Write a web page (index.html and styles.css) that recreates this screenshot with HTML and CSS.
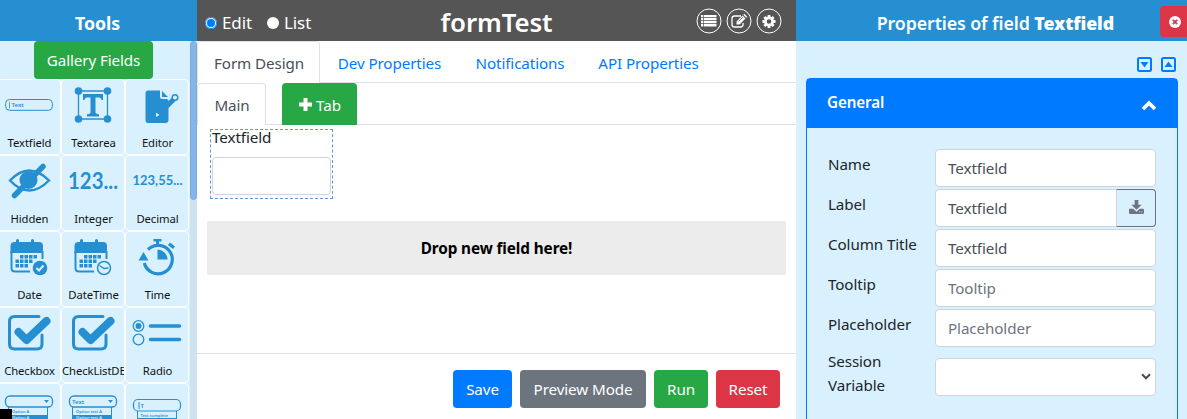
FILE: index.html
```html
<!DOCTYPE html>
<html lang="en">
<head>
<meta charset="utf-8">
<title>formTest</title>
<link rel="stylesheet" href="styles.css">
</head>
<body>
<div class="app">
  <aside class="tools">
    <header class="panel-head tools-head"><span>Tools</span></header>
    <div class="tools-body">
      <div class="tools-list">
        <div class="gallery"><button class="btn green gallery-btn"><span>Gallery Fields</span></button></div>
        <div class="grid">
          <div class="tool"><svg viewBox="0 0 64 52"><rect x="8.6" y="20.5" width="46.800" height="10.800" rx="4" class="ln" stroke-width="1"/><path class="ln" stroke-width=".8" d="M12.500 22.500v7"/><text x="14.500" y="28.400" class="tiny6">Text</text></svg><span>Textfield</span></div>
          <div class="tool"><svg viewBox="0 0 64 52"><path class="ln" stroke-width="1.300" d="M17.500 12h29v28h-29z"/><g class="fl"><circle cx="17.500" cy="12" r="3.800"/><circle cx="46.500" cy="12" r="3.800"/><circle cx="17.500" cy="40" r="3.800"/><circle cx="46.500" cy="40" r="3.800"/><path d="M22 15h20v6h-1.500c-.4-2-1.500-2.500-3-2.500h-3V33c0 1.500.5 2 3.500 2.300V37.500H26v-2.200c3-.3 3.500-.8 3.500-2.300V18.500h-3c-1.500 0-2.600.5-3 2.500H22z"/></g></svg><span>Textarea</span></div>
          <div class="tool"><svg viewBox="0 0 64 52"><path class="fl" d="M23 11.500h12v6q0 2.500 2.500 2.500h4.500l1.500 1.500V41q0 3-3 3H23q-2.500 0-2.500-3V14q0-2.500 2.500-2.500zM37 12l6 6h-6z"/><path class="ln" stroke-width="5" d="M42 27l7-7"/><path class="fl" d="M39 25l4.500 4-5.500 2z"/><circle cx="50" cy="18.500" r="2.800" fill="#d9f1ff" stroke="#268fd1" stroke-width="1.500"/><path fill="#d9f1ff" d="M31 33.500l3.500 2.500-3.500 2z"/></svg><span>Editor</span></div>

          <div class="tool"><svg viewBox="0 0 64 52"><path class="ln" stroke-width="2.400" d="M13 25.500Q32 5.500 52 25.500Q32 45.500 13 25.500z"/><circle class="fl" cx="31.500" cy="25" r="9"/><path class="ln" stroke-width="5.500" stroke-linecap="round" d="M17.500 40.500L46 11.500"/></svg><span>Hidden</span></div>
          <div class="tool"><svg viewBox="0 0 64 52"><text x="7" y="33.500" class="num" font-size="22" textLength="50" lengthAdjust="spacingAndGlyphs">123...</text></svg><span>Integer</span></div>
          <div class="tool"><svg viewBox="0 0 64 52"><text x="7.500" y="30" class="num" font-size="13.500" textLength="50" lengthAdjust="spacingAndGlyphs">123,55...</text></svg><span>Decimal</span></div>

          <div class="tool"><svg viewBox="0 0 64 52"><use href="#calendar"/><circle class="fl" cx="43" cy="37" r="7.300"/><path d="M39.500 37l2.500 2.500 4.500-5" fill="none" stroke="#d9f1ff" stroke-width="2"/></svg><span>Date</span></div>
          <div class="tool"><svg viewBox="0 0 64 52"><use href="#calendar"/><circle cx="43" cy="37" r="6.500" fill="#d9f1ff" stroke="#268fd1" stroke-width="1.500"/><path class="ln" stroke-width="1.500" d="M38.500 34.500l4.500 3 4.500-.5"/></svg><span>DateTime</span></div>
          <div class="tool"><svg viewBox="0 0 64 52"><path class="ln" stroke-width="3.200" d="M23 18.500A14.200 14.200 0 1 1 19.300 32"/><path class="fl" d="M28.500 8h8v2.500H34v4h-3v-4h-2.500zM32.500 18.500A10 10 0 0 1 42.500 28.500h-10zM13.500 29.500L18.500 21l5 8.500zM43 14l2-2.500 5 4-2 2.500z"/></svg><span>Time</span></div>

          <div class="tool"><svg viewBox="0 0 64 52"><use href="#check"/></svg><span>Checkbox</span></div>
          <div class="tool long"><svg viewBox="0 0 64 52"><use href="#check"/></svg><span>CheckListDB</span></div>
          <div class="tool"><svg viewBox="0 0 64 52"><g class="ln" stroke-width="1.300"><circle cx="13.500" cy="19" r="5.300"/><circle cx="13.500" cy="32.500" r="5.300"/></g><circle class="fl" cx="13.500" cy="19" r="3"/><path class="ln" stroke-width="3.600" stroke-linecap="round" d="M25.500 19h29M25.500 32.500h29"/></svg><span>Radio</span></div>

          <div class="tool"><svg viewBox="0 0 64 52"><use href="#drop"/><text x="15" y="30.300" class="tiny4">Option A</text><path class="fl" d="M11 32h40v14H11z"/><text x="15" y="36" class="tiny4 light">Option A</text></svg></div>
          <div class="tool"><svg viewBox="0 0 64 52"><use href="#drop"/><text x="11" y="21" class="tiny6">Text</text><text x="15" y="30.300" class="tiny4">Option text A</text><path class="fl" d="M11 32h40v14H11z"/><text x="15" y="36" class="tiny4 light">Option text A</text></svg></div>
          <div class="tool"><svg viewBox="0 0 64 52"><rect class="ln" x="8.500" y="16.500" width="47" height="11.500" rx="4.500" stroke-width="1.200"/><path class="ln" d="M14 19v7M12.500 28v15M51.500 28v15"/><text x="15.500" y="25" class="tiny6">T</text><text x="15.500" y="33.500" class="tiny4">Text complete</text><path class="fl" d="M12 35h39v9H12z"/></svg></div>
        </div>
      </div>
      <div class="scroll"><i></i></div>
    </div>
    <div class="status-corner"></div>
  </aside>

  <main class="main">
    <header class="main-head">
      <div class="modes"><i class="radio on"></i><span class="edit">Edit</span><i class="radio"></i><span>List</span></div>
      <h1><span>formTest</span></h1>
      <div class="round-icons">
        <svg viewBox="0 0 26 26"><circle cx="13" cy="13" r="12"/><path stroke="none" fill="#fff" d="M5 7h2.300v2.300H5zM8 7h12.500v2.300H8zM5 10h2.300v2.300H5zM8 10h12.500v2.300H8zM5 13h2.300v2.300H5zM8 13h12.500v2.300H8zM5 16h2.300v2.500H5zM8 16h12.500v2.500H8z"/></svg>
        <svg viewBox="0 0 26 26"><circle cx="13" cy="13" r="12"/><path stroke-width="1.300" d="M15 8H8.500Q6 8 6 10.500V16.500Q6 19 8.500 19H14.500Q17 19 17 16.500V15"/><path stroke="none" fill="#fff" d="M10.500 13.500l6-6 3 3-6 6h-3zM17.300 6.700l1-1 3 3-1 1z"/><path stroke="#555" stroke-width=".8" d="M12.500 13.500l4.500-4.500"/></svg>
        <svg viewBox="0 0 26 26"><circle cx="13" cy="13" r="12"/><circle cx="13" cy="13.500" r="3.600" stroke-width="2.600"/><path stroke-width="2.800" d="M13 7v3M13 17v3M6.500 13.500h3M16.500 13.500h3M8.400 8.900l2 2M15.600 16.100l2 2M17.600 8.900l-2 2M10.400 16.100l-2 2"/></svg>
      </div>
    </header>
    <nav class="tabs">
      <a class="tab active t-form"><span>Form Design</span></a>
      <a class="tab t-dev"><span>Dev Properties</span></a>
      <a class="tab t-not"><span>Notifications</span></a>
      <a class="tab t-api"><span>API Properties</span></a>
    </nav>
    <nav class="tabs">
      <a class="tab active t-main"><span>Main</span></a>
      <a class="tab add"><svg viewBox="0 0 13 13"><path d="M4.500 0h4v4.500H13v4H8.500V13h-4V8.500H0v-4h4.500z" fill="#fff"/></svg><span>Tab</span></a>
    </nav>
    <section class="canvas">
      <div class="field"><label>Textfield</label><div class="input"></div></div>
      <div class="drop"><span>Drop new field here!</span></div>
    </section>
    <footer class="actions">
      <button class="btn blue w-save"><span>Save</span></button>
      <button class="btn gray w-prev"><span>Preview Mode</span></button>
      <button class="btn green w-run"><span>Run</span></button>
      <button class="btn red w-reset"><span>Reset</span></button>
    </footer>
  </main>

  <aside class="props">
    <header class="panel-head props-head">
      <span class="props-title">Properties of field <b>Textfield</b></span>
      <button class="close"><svg viewBox="0 0 12 12"><circle cx="6" cy="6" r="6" fill="#fff"/><path d="M3.800 3.800l4.400 4.400M8.200 3.800L3.800 8.200" stroke="#dc3545" stroke-width="1.700"/></svg></button>
    </header>
    <div class="toggles">
      <svg viewBox="0 0 15 15"><rect x="1" y="1" width="13" height="13" rx="1.500"/><path d="M3.500 5h8l-4 5.500z"/></svg>
      <svg viewBox="0 0 15 15"><rect x="1" y="1" width="13" height="13" rx="1.500"/><path d="M3.500 10h8l-4-5.500z"/></svg>
    </div>
    <section class="card">
      <header class="card-head"><span>General</span><svg viewBox="0 0 16 11"><path d="M2 9l6-6 6 6" fill="none" stroke="#fff" stroke-width="3.600"/></svg></header>
      <div class="rows">
        <div class="row"><label>Name</label><div class="input">Textfield</div></div>
        <div class="row"><label>Label</label><div class="input joined"><span>Textfield</span><i class="addon"><svg viewBox="0 0 16 15"><path fill="#6c757d" d="M6 0h4v5h3.500L8 10.500 2.500 5H6zM0 9.500h4.500L8 12.500l3.500-3H15q1 0 1 1V14q0 1-1 1H1q-1 0-1-1z"/><path d="M11 12.800h1M13.300 12.800h1" stroke="#d9f1ff"/></svg></i></div></div>
        <div class="row"><label>Column Title</label><div class="input">Textfield</div></div>
        <div class="row"><label>Tooltip</label><div class="input hint">Tooltip</div></div>
        <div class="row"><label>Placeholder</label><div class="input hint">Placeholder</div></div>
        <div class="row tall"><label>Session<br>Variable</label><div class="input select"><svg viewBox="0 0 10 7"><path d="M1 1.300l4 4 4-4" fill="none" stroke="#444b52" stroke-width="2"/></svg></div></div>
      </div>
    </section>
  </aside>
</div>

<svg class="defs">
  <defs>
    <g id="calendar"><path class="fl" d="M13.500 22v-7q0-4 4-4H19V9.500q0-1.500 1.500-1.500T22 9.500V11h12V9.500Q34 8 35.500 8T37 9.500V11h5q4 0 4 4v7z"/><path class="ln" stroke-width="2" d="M14.500 20v17q0 3.500 3.500 3.500h15M45.500 20v8"/><path class="fl" d="M23 24h3.500v3.500H23zM27.500 24H31v3.500h-3.500zM32 24h3.500v3.500H32zM36.500 24H40v3.500h-3.500zM18.500 28.500H22V32h-3.500zM23 28.500h3.500V32H23zM27.500 28.500H31V32h-3.500zM32 28.500h3.500V32H32zM18.500 33H22v3.500h-3.500zM23 33h3.500v3.500H23zM27.500 33H31v3.500h-3.500z"/></g>
    <g id="check"><path class="ln" stroke-width="3" stroke-linecap="round" d="M42 9.500H17.500Q12.500 9.500 12.500 14.500V37Q12.500 42 17.500 42H40Q45 42 45 37V28"/><path fill="none" stroke="#268fd1" stroke-width="8" stroke-linecap="round" stroke-linejoin="round" d="M21.500 25l8 8L49.500 14"/></g>
    <g id="drop"><rect class="ln" x="8.500" y="13" width="47" height="11" rx="4.500" stroke-width="1.300"/><path class="fl" d="M47 17h5l-2.500 3z"/><path class="ln" d="M11.500 24v23M50.500 24v23"/></g>
  </defs>
</svg>
</body>
</html>
```
FILE: styles.css
```css
* { box-sizing: border-box; }
body { margin: 0; overflow: hidden; background: #fff; font: 15.2px/24px "Noto Sans", "Open Sans", sans-serif; letter-spacing: -0.1px; color: #212529; }
span { white-space: nowrap; }
svg { display: block; flex: none; }
button { font: inherit; letter-spacing: inherit; border: 0; padding: 0; }
.defs { width: 0; height: 0; }
.app { display: grid; grid-template-columns: 197px 599px 391px; height: 419px; overflow: hidden; }

.panel-head { height: 41px; background: #268fd1; color: #fff; font-size: 17.8px; font-weight: 600; display: flex; align-items: center; justify-content: center; padding-top: 4px; }
.tools { position: relative; background: #d9f1ff; overflow: hidden; }
.tools-head { padding-right: 2px; font-weight: 700; }
.tools-body { display: flex; height: 378px; }
.tools-list { width: 190px; overflow: hidden; }
.gallery { height: 38px; padding-left: 34px; }
.btn { display: flex; align-items: center; justify-content: center; height: 38px; border-radius: 4px; color: #fff; }
.blue { background: #007bff; }
.gray { background: #6c757d; }
.green { background: #28a745; }
.red { background: #dc3545; }
.gallery-btn { width: 119px; }
.grid { display: grid; grid-template-columns: repeat(3, 64px); grid-auto-rows: 76px; margin-left: -3px; }
.tool { border: 1px solid #fff; border-radius: 4px; overflow: hidden; display: flex; flex-direction: column; align-items: center; color: #111; font-size: 11.3px; line-height: 18px; letter-spacing: -0.1px; }
.tool svg { width: 64px; height: 52px; margin: -1px; }
.tool span { margin-top: 4px; padding-left: 1px; }
.tool.long span { align-self: flex-start; padding-left: 0; }
.fl { fill: #268fd1; }
.ln { fill: none; stroke: #268fd1; }
.num { font-family: Lato, sans-serif; font-weight: 700; fill: #268fd1; letter-spacing: 0; }
.tiny6 { font-size: 6px; fill: #268fd1; font-weight: 600; letter-spacing: 0; }
.tiny4 { font-size: 4px; fill: #268fd1; font-weight: 600; letter-spacing: 0; }
.light { fill: #d9f1ff; }
.scroll { width: 7px; background: #cde3ef; }
.scroll i { display: block; height: 159px; background: #84b7e8; border: 1px solid #7ba9e4; border-radius: 4px; }
.status-corner { position: absolute; left: 0; bottom: 0; width: 12px; height: 10px; background: #000; }

.main { display: flex; flex-direction: column; background: #fff; min-width: 0; }
.main-head { height: 41px; background: #555; color: #fff; display: grid; grid-template-columns: 180px 239px 1fr; align-items: center; }
.modes { display: flex; align-items: center; padding: 4px 0 0 8px; font-size: 17px; }
.radio { width: 12px; height: 12px; border-radius: 50%; background: #fff; margin-right: 5px; }
.radio.on { background: #007bff; border: 2px solid #fff; outline: 1px solid #007bff; outline-offset: -1px; }
.edit { width: 45px; }
h1 { margin: 0; font-size: 25.8px; font-weight: 600; text-align: center; padding-top: 2px; line-height: 30px; }
.round-icons { display: flex; gap: 4px; justify-content: flex-end; padding-right: 14px; }
.round-icons svg { width: 26px; height: 26px; fill: none; stroke: #fff; }
.tabs { display: flex; height: 42px; border-bottom: 1px solid #dee2e6; }
.tab { height: 42px; display: flex; align-items: center; justify-content: center; color: #007bff; padding-top: 1px; padding-left: 1px; }
.tab.active { color: #495057; background: #fff; border: 1px solid #dee2e6; border-bottom: 0; border-radius: 4px 4px 0 0; padding-top: 0; }
.t-form { width: 123px; }
.t-dev { width: 138px; }
.t-not { width: 123px; }
.t-api { width: 134px; }
.t-main { width: 69px; }
.add { width: 75px; margin-left: 16px; background: #28a745; color: #fff; gap: 4px; border-radius: 4px 4px 0 0; }
.add svg { width: 13px; height: 13px; }
.canvas { flex: 1; padding: 4px 10px; }
.field { width: 123px; height: 70px; margin-left: 3px; border: 1px dashed #6495e5; padding: 0 1px; }
.field label { display: block; height: 27px; line-height: 15px; }
.input { height: 38px; border: 1px solid #ced4da; border-radius: 4px; background: #fff; color: #495057; }
.drop { margin-top: 22px; height: 54px; background: #ececec; color: #000; font-weight: 700; font-size: 15.3px; display: flex; align-items: center; justify-content: center; }
.actions { height: 66px; border-top: 1px solid #dee2e6; display: flex; gap: 8px; justify-content: flex-end; padding: 16px 16px 0; }
.w-save { width: 59px; }
.w-prev { width: 126px; }
.w-run { width: 54px; }
.w-reset { width: 64px; }

.props { background: #d9f1ff; overflow: hidden; }
.props-head { justify-content: flex-end; padding: 0; }
.props-title { margin: 4px 46px 0 0; }
.close { width: 30px; height: 31px; margin: 2px -3px 0 0; background: #dc3545; border-radius: 4px; padding-left: 9px; }
.close svg { width: 12px; height: 12px; }
.toggles { display: flex; justify-content: flex-end; gap: 9px; height: 37px; padding: 16px 11px 0 0; }
.toggles svg { width: 15px; height: 15px; fill: #007bff; }
.toggles rect { fill: none; stroke: #007bff; stroke-width: 2; }
.card { margin: 0 9px 0 10px; height: 400px; border: 1px solid #007bff; border-radius: 4px 4px 0 0; }
.card-head { height: 49px; background: #007bff; color: #fff; font-weight: 600; display: flex; align-items: center; justify-content: space-between; padding: 0 20px 4px; }
.card-head svg { width: 16px; height: 11px; margin-top: 8px; }
.rows { padding: 21px 21px 0; display: flex; flex-direction: column; gap: 2px; }
.row { display: grid; grid-template-columns: 107px 221px; height: 38px; }
.row label { padding-top: 3px; }
.row .input { display: flex; align-items: center; padding: 0 0 1px 12px; }
.row .hint { color: #6c757d; }
.row .joined { justify-content: space-between; padding: 0 0 0 12px; }
.joined span { padding-bottom: 1px; }
.addon { width: 40px; height: 38px; margin-right: -1px; border: 1px solid #6c757d; border-left-color: #ced4da; border-radius: 0 4px 4px 0; background: #d9f1ff; display: flex; align-items: center; justify-content: center; }
.addon svg { width: 15px; height: 14px; margin-top: -2px; }
.row.tall { height: 48px; padding-top: 9px; }
.tall label { margin-top: -12px; }
.row .select { justify-content: flex-end; padding-right: 4px; }
.select svg { width: 10px; height: 7px; }
```
